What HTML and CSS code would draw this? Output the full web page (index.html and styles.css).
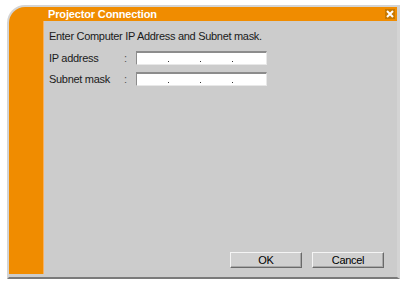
FILE: index.html
```html
<!DOCTYPE html>
<html lang="en">
<head>
    <meta charset="UTF-8">
    <title>Projector Connection</title>
    <link rel="stylesheet" href="styles.css">
</head>
<body>
    <div class="window">
        <div class="titlebar">
            <span class="title">Projector Connection</span>
            <button class="close" title="Close">
                <svg width="8" height="8" viewBox="0 0 8 8"><path d="M1 1L7 7M7 1L1 7" stroke="#fff" stroke-width="2"/></svg>
            </button>
        </div>
        <div class="body">
            <div class="stripe"></div>
            <div class="content">
                <p class="intro">Enter Computer IP Address and Subnet mask.</p>
                <div class="fields">
                    <span class="label">IP address</span>
                    <span class="colon">:</span>
                    <div class="ip-box"><span></span><span></span><span></span><span></span></div>

                    <span class="label">Subnet mask</span>
                    <span class="colon">:</span>
                    <div class="ip-box"><span></span><span></span><span></span><span></span></div>
                </div>
                <div class="actions">
                    <button class="btn">OK</button>
                    <button class="btn">Cancel</button>
                </div>
            </div>
        </div>
    </div>
</body>
</html>
```

FILE: styles.css
```css
body {
    margin: 0;
    background: #fff;
    font-family: "Liberation Sans", Arial, sans-serif;
    font-size: 11px;
}
.window {
    box-sizing: border-box;
    margin: 5px 0 0 7px;
    width: 393px;
    height: 274px;
    border: 2px solid #d4d4d4;
    border-right-width: 3px;
    border-bottom: 2px solid #7a7a7a;
    border-top-left-radius: 18px;
    background: #f08c00;
    overflow: hidden;
    display: flex;
    flex-direction: column;
}
.titlebar {
    height: 14px;
    display: flex;
    align-items: center;
    padding-left: 39px;
    padding-right: 2px;
}
.title {
    flex: 1;
    color: #fff;
    font-weight: bold;
    font-size: 11px;
    letter-spacing: -0.15px;
}
.close {
    width: 10px;
    height: 10px;
    padding: 0;
    border: none;
    background: #c87800;
    display: flex;
    align-items: center;
    justify-content: center;
}
.body {
    flex: 1;
    display: flex;
    background: #cccccc;
}
.stripe {
    width: 34px;
    margin-bottom: 3px;
    background: #f08c00;
    border-right: 1px solid #f6b060;
}
.content {
    flex: 1;
    display: flex;
    flex-direction: column;
    padding: 0 13px 9px 5px;
    color: #1a1a1a;
    letter-spacing: -0.3px;
}
.intro {
    margin: 9px 0 0;
    line-height: 12px;
}
.fields {
    display: grid;
    grid-template-columns: 75px 12px 131px;
    row-gap: 7px;
    align-items: center;
    margin-top: 9px;
}
.colon {
    color: #555;
}
.ip-box {
    box-sizing: border-box;
    height: 14px;
    background: #fff;
    border-top: 2px solid #8c8c8c;
    border-left: 1px solid #8c8c8c;
    border-right: 1px solid #e8e8e8;
    border-bottom: 1px solid #e8e8e8;
    display: flex;
}
.ip-box span {
    width: 32px;
    position: relative;
}
.ip-box span:not(:last-child)::after {
    content: "";
    position: absolute;
    right: 0;
    bottom: 2px;
    width: 1px;
    height: 1px;
    background: #333;
}
.actions {
    margin-top: auto;
    display: flex;
    justify-content: flex-end;
    gap: 10px;
}
.btn {
    box-sizing: border-box;
    width: 72px;
    height: 16px;
    padding: 0;
    font-family: "Liberation Sans", Arial, sans-serif;
    font-size: 11px;
    letter-spacing: -0.3px;
    color: #000;
    background: #d0d0d0;
    border: 1px solid;
    border-color: #f4f4f4 #6a6a6a #6a6a6a #f4f4f4;
    box-shadow: inset -1px -1px 0 #a8a8a8;
}
```
